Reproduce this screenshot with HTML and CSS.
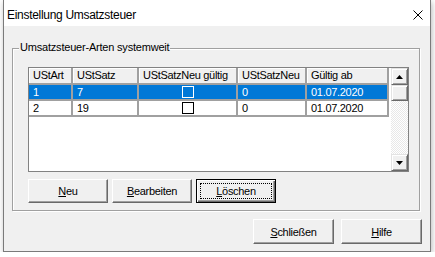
FILE: index.html
```html
<!DOCTYPE html>
<html lang="de">
<head>
    <meta charset="UTF-8">
    <title>Einstellung Umsatzsteuer</title>
    <link rel="stylesheet" href="styles.css">
</head>
<body>
    <div class="window">
        <div class="titlebar">
            <span class="title">Einstellung Umsatzsteuer</span>
            <svg class="close" width="10" height="10" viewBox="0 0 10 10">
                <path d="M0.5 0.5 L9.5 9.5 M9.5 0.5 L0.5 9.5" stroke="#000" stroke-width="1" fill="none"/>
            </svg>
        </div>

        <div class="client">
            <div class="group">
                <span class="group-label">Umsatzsteuer-Arten systemweit</span>

                <div class="grid">
                    <div class="cols">
                        <div class="row head">
                            <div class="cell">UStArt</div>
                            <div class="cell">UStSatz</div>
                            <div class="cell">UStSatzNeu gültig</div>
                            <div class="cell">UStSatzNeu</div>
                            <div class="cell">Gültig ab</div>
                        </div>
                        <div class="row sel">
                            <div class="cell">1</div>
                            <div class="cell">7</div>
                            <div class="cell center"><span class="check"></span></div>
                            <div class="cell">0</div>
                            <div class="cell">01.07.2020</div>
                        </div>
                        <div class="row">
                            <div class="cell">2</div>
                            <div class="cell">19</div>
                            <div class="cell center"><span class="check"></span></div>
                            <div class="cell">0</div>
                            <div class="cell">01.07.2020</div>
                        </div>
                    </div>
                    <div class="vscroll">
                        <div class="sb-btn">
                            <svg width="7" height="4" viewBox="0 0 7 4"><path d="M3.5 0 L7 4 L0 4 Z" fill="#000"/></svg>
                        </div>
                        <div class="sb-thumb"></div>
                        <div class="sb-track"></div>
                        <div class="sb-btn">
                            <svg width="7" height="4" viewBox="0 0 7 4"><path d="M0 0 L7 0 L3.5 4 Z" fill="#000"/></svg>
                        </div>
                    </div>
                </div>

                <div class="tools">
                    <button class="btn"><u>N</u>eu</button>
                    <button class="btn"><u>B</u>earbeiten</button>
                    <button class="btn default"><u>L</u>öschen</button>
                </div>
            </div>

            <div class="footer">
                <button class="btn wide"><u>S</u>chließen</button>
                <button class="btn wide"><u>H</u>ilfe</button>
            </div>
        </div>
    </div>
</body>
</html>
```

FILE: styles.css
```css
body {
    margin: 0;
    background: #fff;
    font-family: "Liberation Sans", Arial, sans-serif;
    font-size: 11px;
    color: #000;
}
.window {
    margin-left: 3px;
    width: 426px;
    border: 1px solid #7a7a7a;
    border-top: 0;
    background: #f0f0f0;
    box-shadow: 1px 2px 6px rgba(0,0,0,0.28);
}
.titlebar {
    height: 26px;
    box-sizing: border-box;
    padding: 4px 7px 0 3px;
    background: #fff;
    display: flex;
    align-items: center;
    justify-content: space-between;
}
.title {
    font-size: 12px;
    letter-spacing: -0.3px;
}
.client {
    padding: 22px 10px 7px 8px;
}
.group {
    position: relative;
    border: 1px solid #a0a0a0;
    box-shadow: 1px 1px 0 #fff, inset 1px 1px 0 #fff;
    padding: 18px 10px 7px 15px;
}
.group-label {
    position: absolute;
    top: -8px;
    left: 6px;
    padding: 0 1px;
    background: #f0f0f0;
    line-height: 13px;
    letter-spacing: -0.2px;
}
.grid {
    display: flex;
    gap: 2px;
    height: 103px;
    border: 1px solid #828282;
    background: #fff;
}
.cols {
    width: 360px;
}
.row {
    display: grid;
    grid-template-columns: 44px 66px 99px 69px 82px;
}
.cell {
    box-sizing: border-box;
    height: 16px;
    line-height: 14px;
    padding-left: 4px;
    border-right: 2px solid #a0a0a0;
    border-bottom: 2px solid #a0a0a0;
    white-space: nowrap;
    overflow: hidden;
    letter-spacing: -0.3px;
}
.head .cell {
    height: 17px;
    line-height: 15px;
    background: #f0f0f0;
    box-shadow: inset 1px 1px 0 #fff;
}
.sel .cell {
    background: #0078d7;
    color: #fff;
}
.cell.center {
    padding-left: 0;
    display: flex;
    align-items: center;
    justify-content: center;
}
.check {
    width: 12px;
    height: 12px;
    box-sizing: border-box;
    border: 1px solid #000;
}
.sel .check {
    border-color: #fff;
}
.vscroll {
    width: 17px;
    display: flex;
    flex-direction: column;
}
.sb-btn,
.sb-thumb {
    box-sizing: border-box;
    background: #f0f0f0;
    border: 1px solid;
    border-color: #e3e3e3 #696969 #696969 #e3e3e3;
    box-shadow: inset 1px 1px 0 #fff, inset -1px -1px 0 #a0a0a0;
}
.sb-btn {
    height: 17px;
    display: flex;
    align-items: center;
    justify-content: center;
}
.sb-btn svg {
    display: block;
}
.sb-thumb {
    height: 16px;
}
.sb-track {
    flex: 1;
    background: repeating-conic-gradient(#fff 0 25%, #e8e8e8 0 50%) 0 0 / 2px 2px;
}
.tools {
    display: flex;
    gap: 4px;
    margin-top: 7px;
}
.btn {
    width: 80px;
    height: 24px;
    padding: 0;
    font-family: "Liberation Sans", Arial, sans-serif;
    font-size: 11px;
    letter-spacing: -0.3px;
    color: #000;
    background: #f0f0f0;
    border: 1px solid;
    border-color: #fff #696969 #696969 #fff;
    box-shadow: inset -1px -1px 0 #a0a0a0;
}
.btn.default {
    border-color: #000;
    box-shadow: inset 1px 1px 0 #fff, inset -1px -1px 0 #696969, inset -2px -2px 0 #a0a0a0;
    outline: 1px dotted #000;
    outline-offset: -5px;
}
.btn.wide {
    width: 81px;
    height: 25px;
}
.footer {
    display: flex;
    justify-content: flex-end;
    gap: 7px;
    margin-top: 8px;
    margin-right: -2px;
}
```
